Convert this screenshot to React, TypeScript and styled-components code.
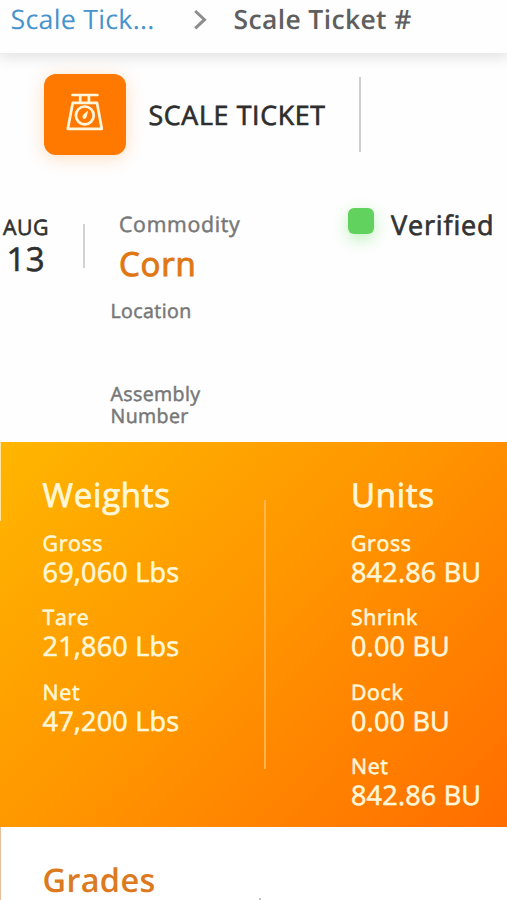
import React from "react";
import styled, { createGlobalStyle } from "styled-components";

const Global = createGlobalStyle`
  *, *::before, *::after { box-sizing: border-box; }
  body {
    margin: 0;
    background: #fefefe;
    font-family: "Open Sans", sans-serif;
    text-rendering: geometricPrecision;
    overflow: hidden;
  }
`;

const Page = styled.main`
  width: 507px;
  height: 900px;
  overflow: hidden;
  display: flex;
  flex-direction: column;
`;

const Breadcrumbs = styled.nav`
  flex: none;
  height: 53px;
  padding: 0 0 0 10.5px;
  display: flex;
  align-items: flex-start;
  background: #fefefe;
  box-shadow: 0 2px 14px 2px rgba(0, 0, 0, 0.12);
  line-height: 37px;
  white-space: nowrap;
`;

const CrumbLink = styled.a`
  width: 182px;
  color: #4693cd;
  font-size: 26.8px;
  letter-spacing: 0.25px;
`;

const Chevron = styled.svg`
  width: 14px;
  height: 22px;
  margin: 9px 27px 0 0;
`;

const CrumbCurrent = styled.span`
  padding-top: 1px;
  color: #5f5f5f;
  font-size: 26.5px;
  font-weight: 600;
  letter-spacing: 0.36px;
`;

const TitleBar = styled.header`
  flex: none;
  height: 145px;
  padding: 21px 0 0 44px;
  display: flex;
  align-items: flex-start;
`;

const IconTile = styled.div`
  width: 82px;
  height: 81px;
  display: flex;
  justify-content: center;
  padding-top: 18px;
  border-radius: 12px;
  background: #ff7800;
  box-shadow: 0 3px 18px rgba(255, 120, 0, 0.24);
`;

const Title = styled.h1`
  width: 210.5px;
  margin: 0 0 0 22.5px;
  color: #2e2e2e;
  font-size: 26.7px;
  font-weight: 400;
  line-height: 82px;
  letter-spacing: 0.7px;
  white-space: nowrap;
  -webkit-text-stroke: 0.7px currentColor;
`;

const TitleRule = styled.div`
  width: 2px;
  height: 75px;
  margin-top: 3px;
  background: #d0d0d0;
`;

const Summary = styled.section`
  flex: none;
  height: 244px;
  padding-top: 8px;
  display: grid;
  grid-template-columns: 83px 27px 238px 1fr;
  align-items: start;
`;

const DateBlock = styled.div`
  padding: 7px 0 0 3px;
  width: 50px;
  color: #303030;
  -webkit-text-stroke: 0.6px currentColor;
`;

const Month = styled.div`
  font-size: 21.3px;
  line-height: 30px;
  letter-spacing: 0.5px;
`;

const Day = styled.div`
  padding-left: 3.5px;
  font-size: 33px;
  line-height: 32px;
  letter-spacing: 0.4px;
`;

const DateRule = styled.div`
  width: 2px;
  height: 44px;
  margin-top: 18px;
  background: #d2d2d2;
`;

const Details = styled.div`
  display: flex;
  flex-direction: column;
`;

const Commodity = styled.div`
  padding-left: 9px;
  height: 93px;
`;

const CommodityLabel = styled.div`
  padding-top: 4px;
  color: #777;
  font-size: 21.3px;
  line-height: 30px;
  letter-spacing: 0.7px;
  -webkit-text-stroke: 0.5px currentColor;
`;

const CommodityValue = styled.div`
  padding-top: 1px;
  color: #df7715;
  font-size: 33px;
  line-height: 46px;
  letter-spacing: 0.8px;
  -webkit-text-stroke: 1px currentColor;
`;

const Field = styled.div`
  width: 110px;
  height: 83px;
  padding: 1px 0 0 0.5px;
  color: #777;
  font-size: 19.6px;
  line-height: 22px;
  letter-spacing: 0.38px;
  -webkit-text-stroke: 0.5px currentColor;
`;

const Status = styled.div`
  display: flex;
  align-items: flex-start;
  color: #333;
  font-size: 27px;
  line-height: 37px;
  letter-spacing: 0.85px;
  -webkit-text-stroke: 0.7px currentColor;
`;

const StatusMark = styled.span`
  width: 26px;
  height: 26px;
  margin: 2px 17px 0 0;
  border-radius: 6px;
  background: #62d25e;
  box-shadow: 0 5px 16px rgba(98, 222, 94, 0.42);
`;

const Panel = styled.section`
  flex: none;
  height: 385px;
  padding: 31px 0 0 42.6px;
  display: grid;
  grid-template-columns: 221.4px 87px 1fr;
  align-items: start;
  position: relative;
  background: linear-gradient(135deg, #ffb600 0%, #ff9700 46%, #ff6d00 100%);
  color: #fff7d8;

  &::before {
    content: "";
    position: absolute;
    left: 0;
    top: 0;
    width: 1px;
    height: 79px;
    background: #ffe3a0;
  }
`;

const PanelRule = styled.div`
  width: 2px;
  height: 269px;
  margin-top: 27px;
  background: #ffb44c;
`;

const PanelHeading = styled.h2`
  margin: 0 0 12.5px;
  font-size: 33px;
  font-weight: 400;
  line-height: 44px;
  letter-spacing: 0.75px;
  -webkit-text-stroke: 0.8px currentColor;
`;

const Measure = styled.div`
  height: 74.5px;
  white-space: nowrap;
  -webkit-text-stroke: 0.6px currentColor;
`;

const MeasureLabel = styled.div`
  font-size: 21.3px;
  line-height: 27px;
  letter-spacing: 0.65px;
`;

const MeasureValue = styled.div`
  font-size: 27px;
  line-height: 30px;
  letter-spacing: 0.2px;
`;

const GradesSection = styled.section`
  flex: none;
  height: 73px;
  padding: 31px 0 0 41.5px;
  display: flex;
  align-items: flex-start;
  border-left: 1px solid #e8bd9b;
  background: #fff;
`;

const GradesHeading = styled.h2`
  width: 216.5px;
  margin: 0;
  color: #dc7a20;
  font-size: 32.5px;
  font-weight: 600;
  line-height: 44px;
  height: 42px;
  letter-spacing: 0.3px;
`;

const GradesRule = styled.div`
  width: 2px;
  height: 2px;
  margin-top: 40px;
  background: #c4c4c4;
`;

const weights = [
  ["Gross", "69,060 Lbs"],
  ["Tare", "21,860 Lbs"],
  ["Net", "47,200 Lbs"],
];

const units = [
  ["Gross", "842.86 BU"],
  ["Shrink", "0.00 BU"],
  ["Dock", "0.00 BU"],
  ["Net", "842.86 BU"],
];

function MeasureColumn({ title, rows }: { title: string; rows: string[][] }) {
  return (
    <div>
      <PanelHeading>{title}</PanelHeading>
      {rows.map(([label, value]) => (
        <Measure key={label}>
          <MeasureLabel>{label}</MeasureLabel>
          <MeasureValue>{value}</MeasureValue>
        </Measure>
      ))}
    </div>
  );
}

function ScaleIcon() {
  return (
    <svg width="40" height="40" viewBox="0 0 40 40" fill="none" stroke="#fff6dc" strokeWidth="2.7" strokeLinecap="round" strokeLinejoin="round">
      <path d="M7.4 3H32.4M15.2 3v7.4M23.9 3v7.4" />
      <path d="M7.8 10.8H32L36.8 36.8H2.8Z" />
      <circle cx="19.8" cy="23.4" r="8.9" />
      <path d="M18.1 26.6C17 25.6 17.4 23.8 18.5 22.6L23.2 18.2L21.7 24.4C21.1 26.3 19.5 27.6 18.1 26.6Z" fill="#fff6dc" stroke="none" />
    </svg>
  );
}

export default function App() {
  return (
    <>
      <Global />
      <Page>
        <Breadcrumbs>
          <CrumbLink>Scale Tick...</CrumbLink>
          <Chevron viewBox="0 0 14 22" fill="none" stroke="#8d8d8d" strokeWidth="3">
            <path d="M2.2 2L11.5 10.7L2.2 19.4" />
          </Chevron>
          <CrumbCurrent>Scale Ticket #</CrumbCurrent>
        </Breadcrumbs>
        <TitleBar>
          <IconTile>
            <ScaleIcon />
          </IconTile>
          <Title>SCALE TICKET</Title>
          <TitleRule />
        </TitleBar>
        <Summary>
          <DateBlock>
            <Month>AUG</Month>
            <Day>13</Day>
          </DateBlock>
          <DateRule />
          <Details>
            <Commodity>
              <CommodityLabel>Commodity</CommodityLabel>
              <CommodityValue>Corn</CommodityValue>
            </Commodity>
            <Field>Location</Field>
            <Field>Assembly Number</Field>
          </Details>
          <Status>
            <StatusMark />
            Verified
          </Status>
        </Summary>
        <Panel>
          <MeasureColumn title="Weights" rows={weights} />
          <PanelRule />
          <MeasureColumn title="Units" rows={units} />
        </Panel>
        <GradesSection>
          <GradesHeading>Grades</GradesHeading>
          <GradesRule />
        </GradesSection>
      </Page>
    </>
  );
}
